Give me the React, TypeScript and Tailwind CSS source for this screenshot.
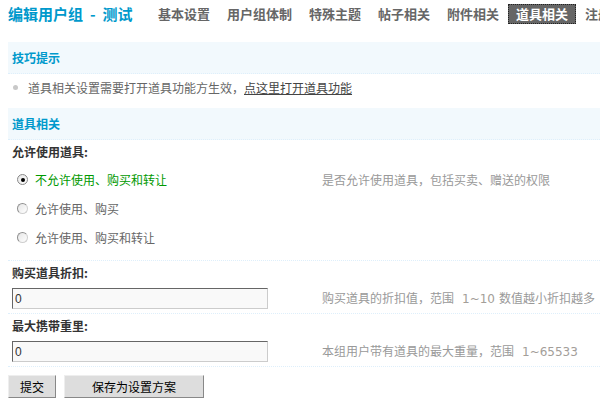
import React from 'react';

const tabs = ['基本设置', '用户组体制', '特殊主题', '帖子相关', '附件相关', '道具相关', '注册相关'];
const activeTab = '道具相关';

// ── Section header bar ──
function SectionTitle({ text }: { text: string }) {
  return (
    <div className="h-[32px] bg-[#f2f9fd] border-b border-dotted border-[#deeffb] px-[4px] flex items-center text-[12px] font-bold text-[#09c]">
      {text}
    </div>
  );
}

// ── Radio dot ──
function Radio({ checked }: { checked?: boolean }) {
  return (
    <span
      className={`w-[11px] h-[11px] rounded-full border flex items-center justify-center bg-gradient-to-br from-[#e6e6e6] to-white ${
        checked ? 'border-[#888]' : 'border-[#8f8f8f] border-b-[#cfcfcf] border-r-[#cfcfcf]'
      }`}
    >
      {checked && <span className="w-[4px] h-[4px] rounded-full bg-black" />}
    </span>
  );
}

function Num({ children }: { children: React.ReactNode }) {
  return <span className="ml-[8px] mr-[4px] font-['DejaVu_Sans',sans-serif] text-[#a39e99]">{children}</span>;
}

function FieldLabel({ text }: { text: string }) {
  return <div className="h-[23px] px-[4px] flex items-center text-[12px] font-bold text-[#333]">{text}</div>;
}

function InputRow({ value, tip }: { value: string; tip: React.ReactNode }) {
  return (
    <div className="h-[30px] flex items-center border-b border-dotted border-[#deeffb]">
      <div className="w-[310px] pl-[4px]">
        <input
          defaultValue={value}
          className="w-[256px] h-[21px] border border-t-[#666] border-l-[#666] border-r-[#ccc] border-b-[#ccc] bg-[#f9f9f9] px-[2px] text-[12px] text-[#333] font-['Liberation_Sans',sans-serif] outline-none"
        />
      </div>
      <div className="pl-[4px] text-[12px] text-[#999]">{tip}</div>
    </div>
  );
}

export default function App() {
  const options = ['不允许使用、购买和转让', '允许使用、购买', '允许使用、购买和转让'];

  return (
    <div className="w-full h-[402px] overflow-hidden bg-white whitespace-nowrap font-['Noto_Sans_CJK_SC',sans-serif] text-[12px]">
      <div className="pl-[8px]">
        {/* title + tabs */}
        <div className="h-[42px] flex items-start pt-[4px]">
          <div className="w-[142px] shrink-0 leading-[20px] text-[15px] font-bold text-[#09c]">
            编辑用户组<span className="mx-[7px]">-</span>测试
          </div>
          <ul className="flex gap-[1px]">
            {tabs.map((t) => (
              <li
                key={t}
                className={`h-[20px] px-[7px] leading-[18px] text-[13px] font-bold border border-dotted ${
                  t === activeTab ? 'bg-[#666] text-white border-[#222]' : 'text-[#666] border-transparent'
                }`}
              >
                {t}
              </li>
            ))}
          </ul>
        </div>

        <SectionTitle text="技巧提示" />
        <div className="h-[34px] pt-[6px] pl-[4px] flex items-start leading-[16px] text-[#666]">
          <span className="mt-[5px] ml-[1px] w-[5px] h-[5px] rounded-full bg-[#c8c8c8]" />
          <span className="ml-[10px]">
            道具相关设置需要打开道具功能方生效，<span className="underline text-[#444]">点这里打开道具功能</span>
          </span>
        </div>

        <SectionTitle text="道具相关" />
        <FieldLabel text="允许使用道具:" />
        <div className="flex pt-[2px] pb-[8px] border-b border-dotted border-[#deeffb]">
          <div className="w-[310px] pl-[4px]">
            {options.map((o, i) => (
              <div key={o} className="h-[29px] flex items-center pl-[5px] gap-[7px]">
                <Radio checked={i === 0} />
                <span className={i === 0 ? 'text-[#090]' : 'text-[#666]'}>{o}</span>
              </div>
            ))}
          </div>
          <div className="pl-[4px] h-[29px] flex items-center text-[#999]">是否允许使用道具，包括买卖、赠送的权限</div>
        </div>

        <FieldLabel text="购买道具折扣:" />
        <InputRow
          value="0"
          tip={
            <>
              购买道具的折扣值，范围<Num>1~10</Num>数值越小折扣越多
            </>
          }
        />
        <FieldLabel text="最大携带重里:" />
        <InputRow
          value="0"
          tip={
            <>
              本组用户带有道具的最大重量，范围<Num>1~65533</Num>
            </>
          }
        />

        <div className="pt-[8px] flex gap-[8px]">
          <button className="w-[48px] h-[23px] bg-[#ddd] border border-t-[#eee] border-l-[#eee] border-r-[#888] border-b-[#888] text-[12px] text-black">
            提交
          </button>
          <button className="w-[140px] h-[23px] bg-[#ddd] border border-t-[#eee] border-l-[#eee] border-r-[#888] border-b-[#888] text-[12px] text-black">
            保存为设置方案
          </button>
        </div>
      </div>
    </div>
  );
}
